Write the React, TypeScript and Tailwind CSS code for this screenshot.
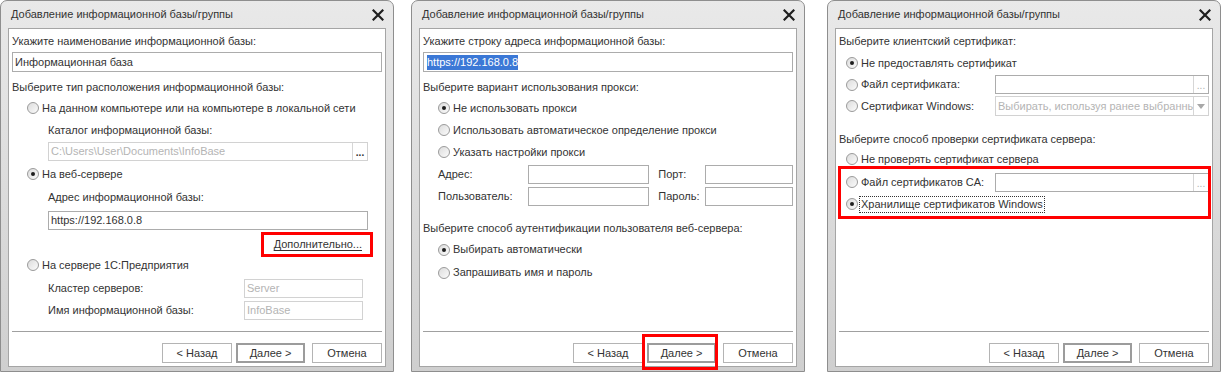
import React from "react";

const FONT = "font-['Liberation_Sans',Arial,sans-serif]";

function CloseX() {
  return (
    <svg width="12" height="12" viewBox="0 0 12 12" className="shrink-0">
      <path d="M1.5 1.5 L10.5 10.5 M10.5 1.5 L1.5 10.5" stroke="#1f1f1f" strokeWidth="2.2" strokeLinecap="square" />
    </svg>
  );
}

function Radio({ checked }: { checked?: boolean }) {
  return (
    <span className="w-[12px] h-[12px] rounded-full border border-[#9a9a9a] bg-gradient-to-br from-[#dcdcdc] to-[#fbfbfb] flex items-center justify-center shrink-0">
      {checked && <span className="w-[4px] h-[4px] rounded-full bg-[#1e1e1e]" />}
    </span>
  );
}

function Field({
  value,
  disabled,
  dots,
  dotsDark,
  select,
  className,
  children,
}: {
  value?: string;
  disabled?: boolean;
  dots?: boolean;
  dotsDark?: boolean;
  select?: boolean;
  className?: string;
  children?: React.ReactNode;
}) {
  return (
    <div
      className={
        "h-[19px] border bg-white flex items-stretch overflow-hidden shrink-0 " +
        (disabled ? "border-[#d2d2d2] " : "border-[#acacac] ") +
        (className ?? "")
      }
    >
      <div
        className={
          "flex-1 flex items-center pl-[2px] whitespace-nowrap overflow-hidden text-[11px] " +
          (disabled ? "text-[#b4b4b4]" : "text-[#333]")
        }
      >
        {children ?? value}
      </div>
      {dots && (
        <div
          className={
            "w-[15px] border-l border-[#d6d6d6] flex items-end justify-center pb-[2px] text-[10px] leading-[10px] " +
            (dotsDark ? "text-[#333] font-bold" : "text-[#b0b0b0]")
          }
        >
          ...
        </div>
      )}
      {select && (
        <div className="w-[15px] border-l border-[#d6d6d6] flex items-center justify-center">
          <svg width="8" height="5" viewBox="0 0 8 5">
            <path d="M0 0 L8 0 L4 5 Z" fill="#a8a8a8" />
          </svg>
        </div>
      )}
    </div>
  );
}

function Button({ label, def, w }: { label: string; def?: boolean; w: string }) {
  return (
    <div
      className={
        "h-[20px] flex items-center justify-center text-[11px] text-[#333] bg-white " +
        w +
        " " +
        (def ? "border-2 border-[#9c9c9c]" : "border border-[#b4b4b4]")
      }
    >
      {label}
    </div>
  );
}

function Dialog({ children, nextHighlighted }: { children: React.ReactNode; nextHighlighted?: boolean }) {
  return (
    <div className="w-[394px] h-[372px] shrink-0 rounded-t-[7px] border border-[#8e8e8e] bg-gradient-to-b from-[#e9e9e9] to-[#cfcfcf] flex flex-col">
      <div className="h-[27px] flex items-center pl-[10px] pr-[9px]">
        <span className="flex-1 text-[11px] text-[#333]">Добавление информационной базы/группы</span>
        <CloseX />
      </div>
      <div className="flex-1 mx-[7px] mb-[4px] bg-white border border-[#a5a5a5] flex flex-col px-[3px]">
        <div className="flex flex-col pt-[1px]">{children}</div>
        <div className="mt-auto flex flex-col">
          <div className="h-px bg-[#a0a0a0]" />
          <div className="mt-[11px] mb-[3px] flex items-center justify-end h-[20px]">
            <Button label="< Назад" w="w-[70px]" />
            <div className="ml-[4px] relative">
              <Button label="Далее >" def w="w-[69px]" />
              {nextHighlighted && (
                <div className="absolute -left-[5px] -right-[2px] -top-[9px] -bottom-[7px] border-[3px] border-[#ff0000] pointer-events-none" />
              )}
            </div>
            <div className="ml-[7px]">
              <Button label="Отмена" w="w-[70px]" />
            </div>
          </div>
        </div>
      </div>
    </div>
  );
}

function Label({ children, h, className }: { children: React.ReactNode; h: string; className?: string }) {
  return <div className={"flex items-center text-[11px] text-[#333] whitespace-nowrap " + h + " " + (className ?? "")}>{children}</div>;
}

function RadioRow({
  children,
  checked,
  h,
  pl,
  className,
}: {
  children: React.ReactNode;
  checked?: boolean;
  h: string;
  pl: string;
  className?: string;
}) {
  return (
    <div className={"flex items-center text-[11px] text-[#333] whitespace-nowrap " + h + " " + pl + " " + (className ?? "")}>
      <Radio checked={checked} />
      <span className="ml-[3px]">{children}</span>
    </div>
  );
}

function Dialog1() {
  return (
    <Dialog>
      <Label h="h-[22px]">Укажите наименование информационной базы:</Label>
      <Field value="Информационная база" className="h-[20px]" />
      <Label h="h-[20px]" className="mt-[5px]">Выберите тип расположения информационной базы:</Label>
      <RadioRow h="h-[22px]" pl="pl-[15px]">На данном компьютере или на компьютере в локальной сети</RadioRow>
      <Label h="h-[22px]" className="pl-[36px]">Каталог информационной базы:</Label>
      <div className="pl-[36px] pr-[14px] mt-[1px] flex">
        <Field value="C:\Users\User\Documents\InfoBase" disabled dots dotsDark className="flex-1" />
      </div>
      <RadioRow h="h-[26px]" pl="pl-[15px]" checked>
        На веб-сервере
      </RadioRow>
      <Label h="h-[20px]" className="pl-[36px]">Адрес информационной базы:</Label>
      <div className="pl-[36px] pr-[14px] mt-[4px] flex">
        <Field value="https://192.168.0.8" className="flex-1" />
      </div>
      <div className="h-[26px] flex items-start justify-end pr-[9px] pt-[2px]">
        <div className="h-[25px] border-[3px] border-[#ff0000] pl-[10px] pr-[8px] flex items-center text-[11px] text-[#333] underline underline-offset-2">
          Дополнительно...
        </div>
      </div>
      <RadioRow h="h-[18px]" pl="pl-[15px]">На сервере 1С:Предприятия</RadioRow>
      <div className="flex items-center pl-[36px] mt-[5px] h-[19px]">
        <span className="w-[196px] text-[11px] text-[#333]">Кластер серверов:</span>
        <Field value="Server" disabled className="w-[119px]" />
      </div>
      <div className="flex items-center pl-[36px] mt-[3px] h-[19px]">
        <span className="w-[196px] text-[11px] text-[#333]">Имя информационной базы:</span>
        <Field value="InfoBase" disabled className="w-[119px]" />
      </div>
    </Dialog>
  );
}

function Dialog2() {
  return (
    <Dialog nextHighlighted>
      <Label h="h-[22px]">Укажите строку адреса информационной базы:</Label>
      <Field className="h-[20px]">
        <span className="ml-[1px] bg-[#3b78d6] text-white leading-[15px]">https://192.168.0.8</span>
      </Field>
      <Label h="h-[20px]" className="mt-[5px]">Выберите вариант использования прокси:</Label>
      <RadioRow h="h-[22px]" pl="pl-[15px]" checked>
        Не использовать прокси
      </RadioRow>
      <RadioRow h="h-[22px]" pl="pl-[15px]">Использовать автоматическое определение прокси</RadioRow>
      <RadioRow h="h-[22px]" pl="pl-[15px]">Указать настройки прокси</RadioRow>
      <div className="h-[22px] flex items-center pl-[15px]">
        <span className="w-[91px] text-[11px] text-[#333]">Адрес:</span>
        <Field className="w-[121px]" />
        <span className="ml-[9px] w-[47px] text-[11px] text-[#333]">Порт:</span>
        <Field className="w-[88px]" />
      </div>
      <div className="h-[22px] flex items-center pl-[15px]">
        <span className="w-[91px] text-[11px] text-[#333]">Пользователь:</span>
        <Field className="w-[121px]" />
        <span className="ml-[9px] w-[47px] text-[11px] text-[#333]">Пароль:</span>
        <Field className="w-[88px]" />
      </div>
      <Label h="h-[20px]" className="mt-[11px]">Выберите способ аутентификации пользователя веб-сервера:</Label>
      <RadioRow h="h-[23px]" pl="pl-[15px]" checked>
        Выбирать автоматически
      </RadioRow>
      <RadioRow h="h-[23px]" pl="pl-[15px]">Запрашивать имя и пароль</RadioRow>
    </Dialog>
  );
}

function Dialog3() {
  return (
    <Dialog>
      <Label h="h-[22px]">Выберите клиентский сертификат:</Label>
      <RadioRow h="h-[22px]" pl="pl-[7px]" checked>
        Не предоставлять сертификат
      </RadioRow>
      <div className="h-[21px] flex items-center pl-[7px] text-[11px] text-[#333] whitespace-nowrap">
        <Radio />
        <span className="ml-[3px] flex-1">Файл сертификата:</span>
        <Field dots className="w-[214px]" />
      </div>
      <div className="h-[22px] flex items-center pl-[7px] text-[11px] text-[#333] whitespace-nowrap">
        <Radio />
        <span className="ml-[3px] flex-1">Сертификат Windows:</span>
        <Field select disabled value="Выбирать, используя ранее выбранный сертификат" className="w-[214px] h-[20px]" />
      </div>
      <Label h="h-[20px]" className="mt-[12px]">Выберите способ проверки сертификата сервера:</Label>
      <RadioRow h="h-[20px]" pl="pl-[7px]">Не проверять сертификат сервера</RadioRow>
      <div className="relative">
        <div className="h-[26px] flex items-center pl-[7px] text-[11px] text-[#333] whitespace-nowrap">
          <Radio />
          <span className="ml-[3px] flex-1">Файл сертификатов CA:</span>
          <Field dots className="w-[214px]" />
        </div>
        <div className="h-[18px] flex items-center pl-[7px] text-[11px] text-[#333] whitespace-nowrap">
          <Radio checked />
          <span className="ml-[1px] border border-dotted border-[#333] px-[1px] h-[17px] flex items-center">
            Хранилище сертификатов Windows
          </span>
        </div>
        <div className="absolute -left-[1px] -right-[2px] -top-[3px] -bottom-[6px] border-[3px] border-[#ff0000] pointer-events-none" />
      </div>
    </Dialog>
  );
}

export default function App() {
  return (
    <div className={"w-[1221px] h-[375px] bg-white flex items-start " + FONT}>
      <Dialog1 />
      <div className="ml-[17px]">
        <Dialog2 />
      </div>
      <div className="ml-[22px]">
        <Dialog3 />
      </div>
    </div>
  );
}
